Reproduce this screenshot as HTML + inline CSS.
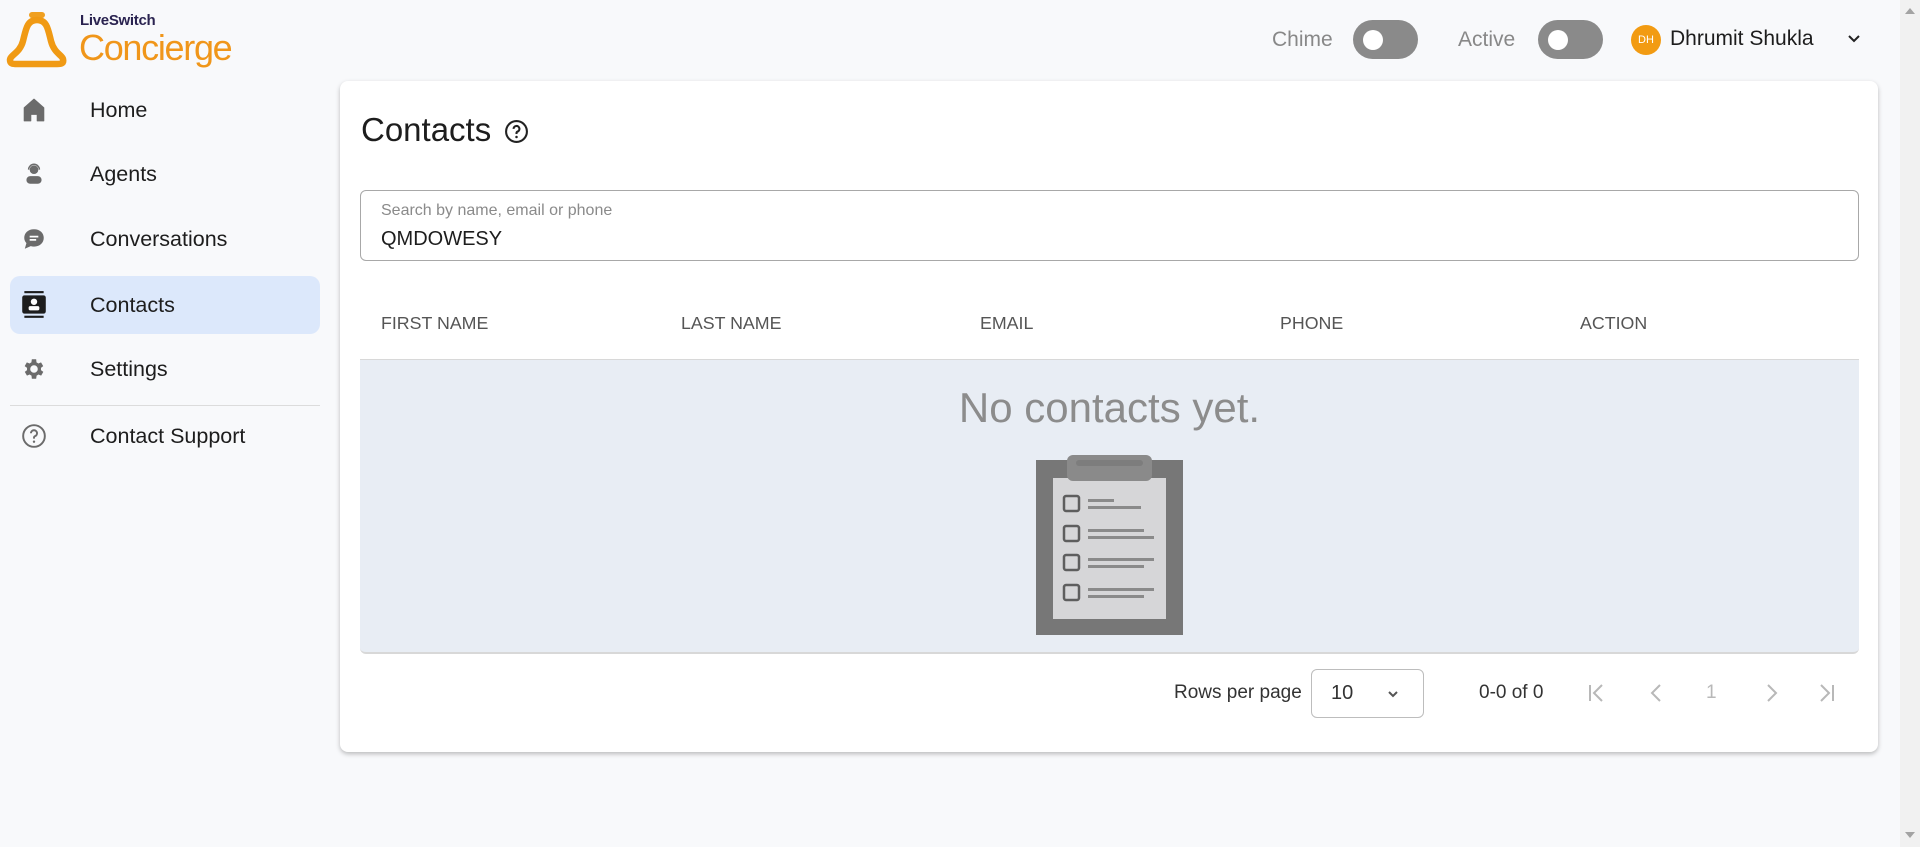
<!DOCTYPE html>
<html><head><meta charset="utf-8"><style>
*{box-sizing:border-box;margin:0;padding:0}
body{width:1920px;height:847px;background:#f8f9fb;font-family:"Liberation Sans",sans-serif;color:#1f1f1f;position:relative;overflow:hidden}
.abs{position:absolute}
.nav{position:absolute;left:0;width:330px;height:60px;display:flex;align-items:center}
.nav .t{position:absolute;left:90px;font-size:21.5px;color:#1d1d1d}
.nav svg{position:absolute;left:21px}
.hdr{position:absolute;top:313px;font-size:17.8px;color:#555}
.tog{position:absolute;width:65px;height:39px;border-radius:20px;background:#8a8a8a}
.tog:after{content:"";position:absolute;left:10px;top:10px;width:20px;height:20px;border-radius:50%;background:#fff}
</style></head><body>
<div class="abs" style="left:1900px;top:0;width:20px;height:847px;background:#f1f1f1"></div>
<div class="abs" style="left:1905px;top:8px;width:0;height:0;border-left:5px solid transparent;border-right:5px solid transparent;border-bottom:6px solid #a3a3a3"></div>
<div class="abs" style="left:1905px;top:832px;width:0;height:0;border-left:5px solid transparent;border-right:5px solid transparent;border-top:6px solid #a3a3a3"></div>
<!-- logo -->
<svg class="abs" style="left:5px;top:11px" width="64" height="57" viewBox="0 0 64 57">
<rect x="24" y="1" width="16" height="6" rx="3" fill="#f0a020"/>
<path d="M32 9 C22 9 21 18 18 30 C15 42 5 44 5 49 C5 53 8 53 12 53 L52 53 C57 53 59 52 58 48 C57 44 49 42 46 30 C43 18 42 9 32 9 Z" fill="none" stroke="#f09a14" stroke-width="6.5" stroke-linejoin="round"/>
</svg>
<div class="abs" style="left:80px;top:12px;font-size:15px;font-weight:bold;color:#2a2350;letter-spacing:-0.3px">LiveSwitch</div>
<div class="abs" style="left:79px;top:27px;font-size:36px;color:#f0961a;letter-spacing:-1.3px">Concierge</div>
<!-- nav -->
<div class="nav" style="top:80px"><svg width="26" height="26" viewBox="0 0 24 24"><path d="M12 2 L3 10 V22 H9 V16 H15 V22 H21 V10 Z" fill="#6b6b6b" stroke="#6b6b6b" stroke-linejoin="round"/></svg><span class="t">Home</span></div>
<div class="nav" style="top:144px"><svg width="26" height="26" viewBox="0 0 24 24"><circle cx="12" cy="8" r="4" fill="#6b6b6b"/><path d="M7 8a5 5 0 0 1 10 0" fill="none" stroke="#6b6b6b" stroke-width="1.3"/><rect x="5" y="14" width="14" height="7" rx="3.5" fill="#6b6b6b"/></svg><span class="t">Agents</span></div>
<div class="nav" style="top:209px"><svg width="26" height="26" viewBox="0 0 24 24"><path d="M12 3C6.5 3 3 6.5 3 11c0 2 .8 3.6 2 4.8L3.5 21 9 18.6c1 .3 2 .4 3 .4 5.5 0 9-3.5 9-8s-3.5-8-9-8z" fill="#6b6b6b"/><rect x="8" y="9" width="8" height="1.6" fill="#fff"/><rect x="8" y="12" width="6" height="1.6" fill="#fff"/></svg><span class="t">Conversations</span></div>
<div class="abs" style="left:10px;top:276px;width:310px;height:58px;border-radius:10px;background:#dce8fb"></div>
<div class="nav" style="top:275px"><svg width="26" height="30" viewBox="0 0 24 28"><rect x="3" y="1" width="18" height="2" fill="#1d1d1d"/><rect x="1" y="5" width="22" height="17" rx="2" fill="#1d1d1d"/><rect x="3" y="24" width="18" height="2" fill="#1d1d1d"/><circle cx="12" cy="11" r="3" fill="#fff"/><rect x="7" y="15" width="10" height="4" rx="1.5" fill="#fff"/></svg><span class="t">Contacts</span></div>
<div class="nav" style="top:339px"><svg width="26" height="26" viewBox="0 0 24 24"><path fill="#6b6b6b" d="M19.4 13a7.6 7.6 0 0 0 0-2l2.1-1.6-2-3.5-2.5 1a7.5 7.5 0 0 0-1.7-1L15 3h-4l-.4 2.9a7.5 7.5 0 0 0-1.7 1l-2.5-1-2 3.5L6.6 11a7.6 7.6 0 0 0 0 2l-2.1 1.6 2 3.5 2.5-1c.5.4 1.1.7 1.7 1L11 21h4l.4-2.9c.6-.3 1.2-.6 1.7-1l2.5 1 2-3.5zM13 15.5a3.5 3.5 0 1 1 0-7 3.5 3.5 0 0 1 0 7z" transform="translate(-1 0)"/></svg><span class="t">Settings</span></div>
<div class="abs" style="left:10px;top:405px;width:310px;height:1px;background:#dcdcdc"></div>
<div class="nav" style="top:406px"><svg width="26" height="26" viewBox="0 0 24 24"><circle cx="12" cy="12" r="10" fill="none" stroke="#6b6b6b" stroke-width="1.8"/><path d="M9.2 9.5a2.8 2.8 0 1 1 3.8 2.6c-.7.3-1 .8-1 1.5v.8" fill="none" stroke="#6b6b6b" stroke-width="1.8"/><circle cx="12" cy="17.3" r="1.1" fill="#6b6b6b"/></svg><span class="t">Contact Support</span></div>
<!-- top bar -->
<div class="abs" style="left:1272px;top:28px;font-size:21px;color:#888">Chime</div>
<div class="tog" style="left:1353px;top:20px"></div>
<div class="abs" style="left:1458px;top:28px;font-size:21px;color:#888">Active</div>
<div class="tog" style="left:1538px;top:20px"></div>
<div class="abs" style="left:1631px;top:25px;width:30px;height:30px;border-radius:50%;background:#f29b12;color:#fff;font-size:11px;text-align:center;line-height:30px">DH</div>
<div class="abs" style="left:1670px;top:27px;font-size:21px;color:#1d1d1d">Dhrumit Shukla</div>
<svg class="abs" style="left:1847px;top:34px" width="14" height="10" viewBox="0 0 14 10"><path d="M2 2l5 5 5-5" fill="none" stroke="#222" stroke-width="2"/></svg>
<!-- card -->
<div class="abs" style="left:340px;top:81px;width:1538px;height:671px;background:#fff;border-radius:8px;box-shadow:0 2px 5px rgba(0,0,0,.25)"></div>
<div class="abs" style="left:361px;top:111px;font-size:33px;color:#1d1d1d">Contacts</div>
<svg class="abs" style="left:504px;top:119px" width="25" height="25" viewBox="0 0 24 24"><circle cx="12" cy="12" r="10" fill="none" stroke="#222" stroke-width="2"/><path d="M9.2 9.5a2.8 2.8 0 1 1 3.8 2.6c-.7.3-1 .8-1 1.5v.8" fill="none" stroke="#222" stroke-width="2"/><circle cx="12" cy="17.3" r="1.2" fill="#222"/></svg>
<div class="abs" style="left:360px;top:190px;width:1499px;height:71px;border:1px solid #a8a8a8;border-radius:6px"></div>
<div class="abs" style="left:381px;top:202px;font-size:16px;color:#8a8a8a">Search by name, email or phone</div>
<div class="abs" style="left:381px;top:228px;font-size:20px;color:#1d1d1d">QMDOWESY</div>
<div class="hdr" style="left:381px">FIRST NAME</div>
<div class="hdr" style="left:681px">LAST NAME</div>
<div class="hdr" style="left:980px">EMAIL</div>
<div class="hdr" style="left:1280px">PHONE</div>
<div class="hdr" style="left:1580px">ACTION</div>
<div class="abs" style="left:360px;top:359px;width:1499px;height:295px;background:#e8edf4;border-top:1px solid #d8d8d8;border-bottom:2px solid #d8d8d8;border-radius:0 0 6px 6px"></div>
<div class="abs" style="left:360px;top:384px;width:1499px;text-align:center;font-size:42px;color:#8c8c8c">No contacts yet.</div>
<svg class="abs" style="left:1036px;top:454px" width="148" height="182" viewBox="0 0 148 182">
<rect x="0" y="6" width="147" height="175" fill="#777"/>
<rect x="17" y="24" width="113" height="141" fill="#d6d6d8"/>
<rect x="31" y="1" width="85" height="26" rx="6" fill="#8a8a8a"/>
<rect x="40" y="6" width="67" height="6" rx="3" fill="#7d7d7d"/>
<g fill="none" stroke="#5e5e5e" stroke-width="2.5"><rect x="28" y="42" width="15" height="15" rx="2"/><rect x="28" y="72" width="15" height="15" rx="2"/><rect x="28" y="101" width="15" height="15" rx="2"/><rect x="28" y="131" width="15" height="15" rx="2"/></g>
<g fill="#8a8a8a"><rect x="52" y="45" width="26" height="3"/><rect x="52" y="52" width="53" height="3"/><rect x="52" y="75" width="56" height="3"/><rect x="52" y="82" width="66" height="3"/><rect x="52" y="104" width="66" height="3"/><rect x="52" y="111" width="56" height="3"/><rect x="52" y="134" width="66" height="3"/><rect x="52" y="141" width="56" height="3"/></g>
</svg>
<!-- pagination -->
<div class="abs" style="left:1174px;top:682px;font-size:19px;color:#333">Rows per page</div>
<div class="abs" style="left:1311px;top:669px;width:113px;height:49px;border:1px solid #bdbdbd;border-radius:6px"></div>
<div class="abs" style="left:1331px;top:682px;font-size:20px;color:#333">10</div>
<svg class="abs" style="left:1386px;top:689px" width="14" height="10" viewBox="0 0 14 10"><path d="M3 3l4 4 4-4" fill="none" stroke="#555" stroke-width="2"/></svg>
<div class="abs" style="left:1479px;top:682px;font-size:19px;color:#333">0-0 of 0</div>
<svg class="abs" style="left:1585px;top:680px" width="260" height="26" viewBox="0 0 260 26" fill="none" stroke="#b8b8b8" stroke-width="2">
<path d="M5 5v16M17 5l-8 8 8 8"/><path d="M75 5l-8 8 8 8"/><path d="M183 5l8 8-8 8"/><path d="M236 5l8 8-8 8M248 5v16"/>
</svg>
<div class="abs" style="left:1706px;top:682px;font-size:19px;color:#b8b8b8">1</div>
</body></html>
